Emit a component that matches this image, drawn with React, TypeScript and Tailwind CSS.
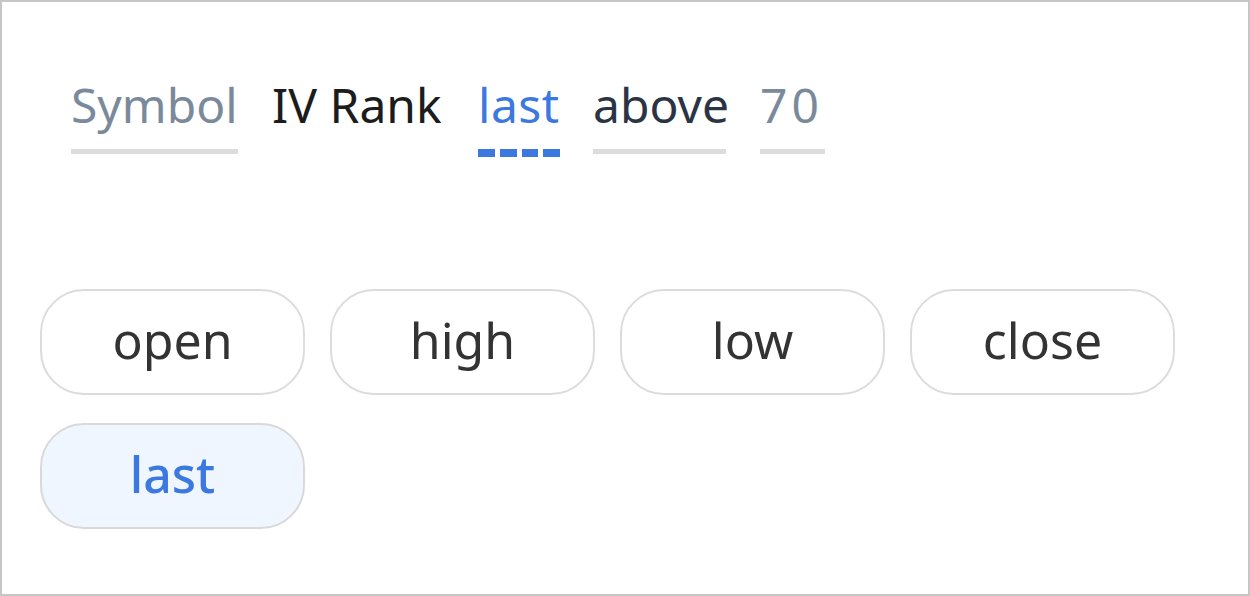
import React from "react";

const font = { fontFamily: '"Noto Sans", "Open Sans", sans-serif' };

export default function App() {
  const chips = ["open", "high", "low", "close", "last"];
  return (
    <div className="w-[1250px] h-[596px] border-2 border-[#c6c6c6] bg-white px-[38px] pt-[79px]" style={font}>
      <div className="flex items-start pl-[31px]">
        <div className="flex flex-col w-[167px]">
          <span className="text-[48px] leading-[48px] text-[#7b8a9b]">Symbol</span>
          <div className="mt-[20px] h-[5px] bg-[#dcdcdc]" />
        </div>
        <div className="ml-[34px] flex flex-col w-[171px]">
          <span className="text-[48px] leading-[48px] text-[#1c1c1c]">IV Rank</span>
        </div>
        <div className="ml-[35px] flex flex-col w-[82px]">
          <span className="text-[48px] leading-[48px] text-[#3b78e0] tracking-[0.5px]">last</span>
          <div className="mt-[20px] h-[8px] flex gap-[5px]">
            <div className="flex-1 bg-[#3b78e0]" />
            <div className="flex-1 bg-[#3b78e0]" />
            <div className="flex-1 bg-[#3b78e0]" />
            <div className="flex-1 bg-[#3b78e0]" />
          </div>
        </div>
        <div className="ml-[33px] flex flex-col w-[133px]">
          <span className="text-[48px] leading-[48px] text-[#2a3444]">above</span>
          <div className="mt-[20px] h-[5px] bg-[#dcdcdc]" />
        </div>
        <div className="ml-[34px] flex flex-col w-[65px]">
          <span className="text-[48px] leading-[48px] text-[#7b8a9b] tracking-[4px]">70</span>
          <div className="mt-[20px] h-[5px] bg-[#dcdcdc]" />
        </div>
      </div>
      <div className="mt-[132px] flex flex-wrap gap-x-[25px] gap-y-[28px]">
        {chips.map((c, i) => {
          const active = i === 4;
          return (
            <div
              key={c}
              className={
                active
                  ? "w-[265px] h-[106px] rounded-[44px] border-2 border-[#d9d9d9] bg-[#f0f6ff] flex items-center justify-center text-[50px] leading-none text-[#3b78e0] font-medium"
                  : "w-[265px] h-[106px] rounded-[44px] border-2 border-[#dcdcdc] bg-white flex items-center justify-center text-[50px] leading-none text-[#333333]"
              }
            >
              <span className="-mt-[4px]">{c}</span>
            </div>
          );
        })}
      </div>
    </div>
  );
}
